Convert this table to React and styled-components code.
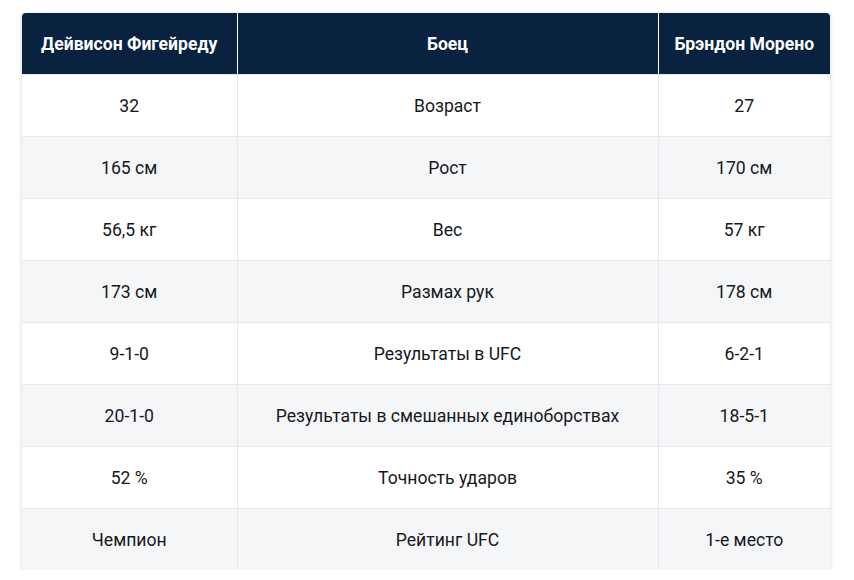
import React from "react";
import styled, { createGlobalStyle } from "styled-components";

const Global = createGlobalStyle`
  html, body { margin: 0; padding: 0; background: #ffffff; }
  body { font-family: Roboto, "Liberation Sans", sans-serif; }
`;

const Wrap = styled.div`
  padding: 13px 24px 0 22px;
`;

const Card = styled.div`
  width: 808px;
  border-radius: 4px;
  overflow: hidden;
  box-shadow: 0 1px 4px rgba(0, 0, 0, 0.18);
`;

const Table = styled.table`
  width: 100%;
  border-collapse: collapse;
  table-layout: fixed;
`;

const Th = styled.th`
  height: 61px;
  padding: 0 8px;
  background: #08223f;
  color: #ffffff;
  font-size: 17.6px;
  font-weight: 700;
  text-align: center;
  border-left: 1px solid #ffffff;
  &:first-child { border-left: none; }
`;

const Tr = styled.tr`
  background: ${(p) => (p.$alt ? "#f5f6f8" : "#ffffff")};
  border-top: 1px solid #e6e8eb;
`;

const Td = styled.td`
  height: 61px;
  padding: 0 8px;
  font-size: 17.6px;
  color: #15181d;
  text-align: center;
  border-left: 1px solid #e6e8eb;
  &:first-child { border-left: none; }
`;

const rows = [
  ["32", "Возраст", "27"],
  ["165 см", "Рост", "170 см"],
  ["56,5 кг", "Вес", "57 кг"],
  ["173 см", "Размах рук", "178 см"],
  ["9-1-0", "Результаты в UFC", "6-2-1"],
  ["20-1-0", "Результаты в смешанных единоборствах", "18-5-1"],
  ["52 %", "Точность ударов", "35 %"],
  ["Чемпион", "Рейтинг UFC", "1-е место"],
];

export default function App() {
  return (
    <>
      <Global />
      <Wrap>
        <Card>
          <Table>
            <colgroup>
              <col style={{ width: 215 }} />
              <col style={{ width: 421 }} />
              <col style={{ width: 172 }} />
            </colgroup>
            <thead>
              <tr>
                <Th>Дейвисон Фигейреду</Th>
                <Th>Боец</Th>
                <Th>Брэндон Морено</Th>
              </tr>
            </thead>
            <tbody>
              {rows.map((r, i) => (
                <Tr key={i} $alt={i % 2 === 1}>
                  <Td>{r[0]}</Td>
                  <Td>{r[1]}</Td>
                  <Td>{r[2]}</Td>
                </Tr>
              ))}
            </tbody>
          </Table>
        </Card>
      </Wrap>
    </>
  );
}
